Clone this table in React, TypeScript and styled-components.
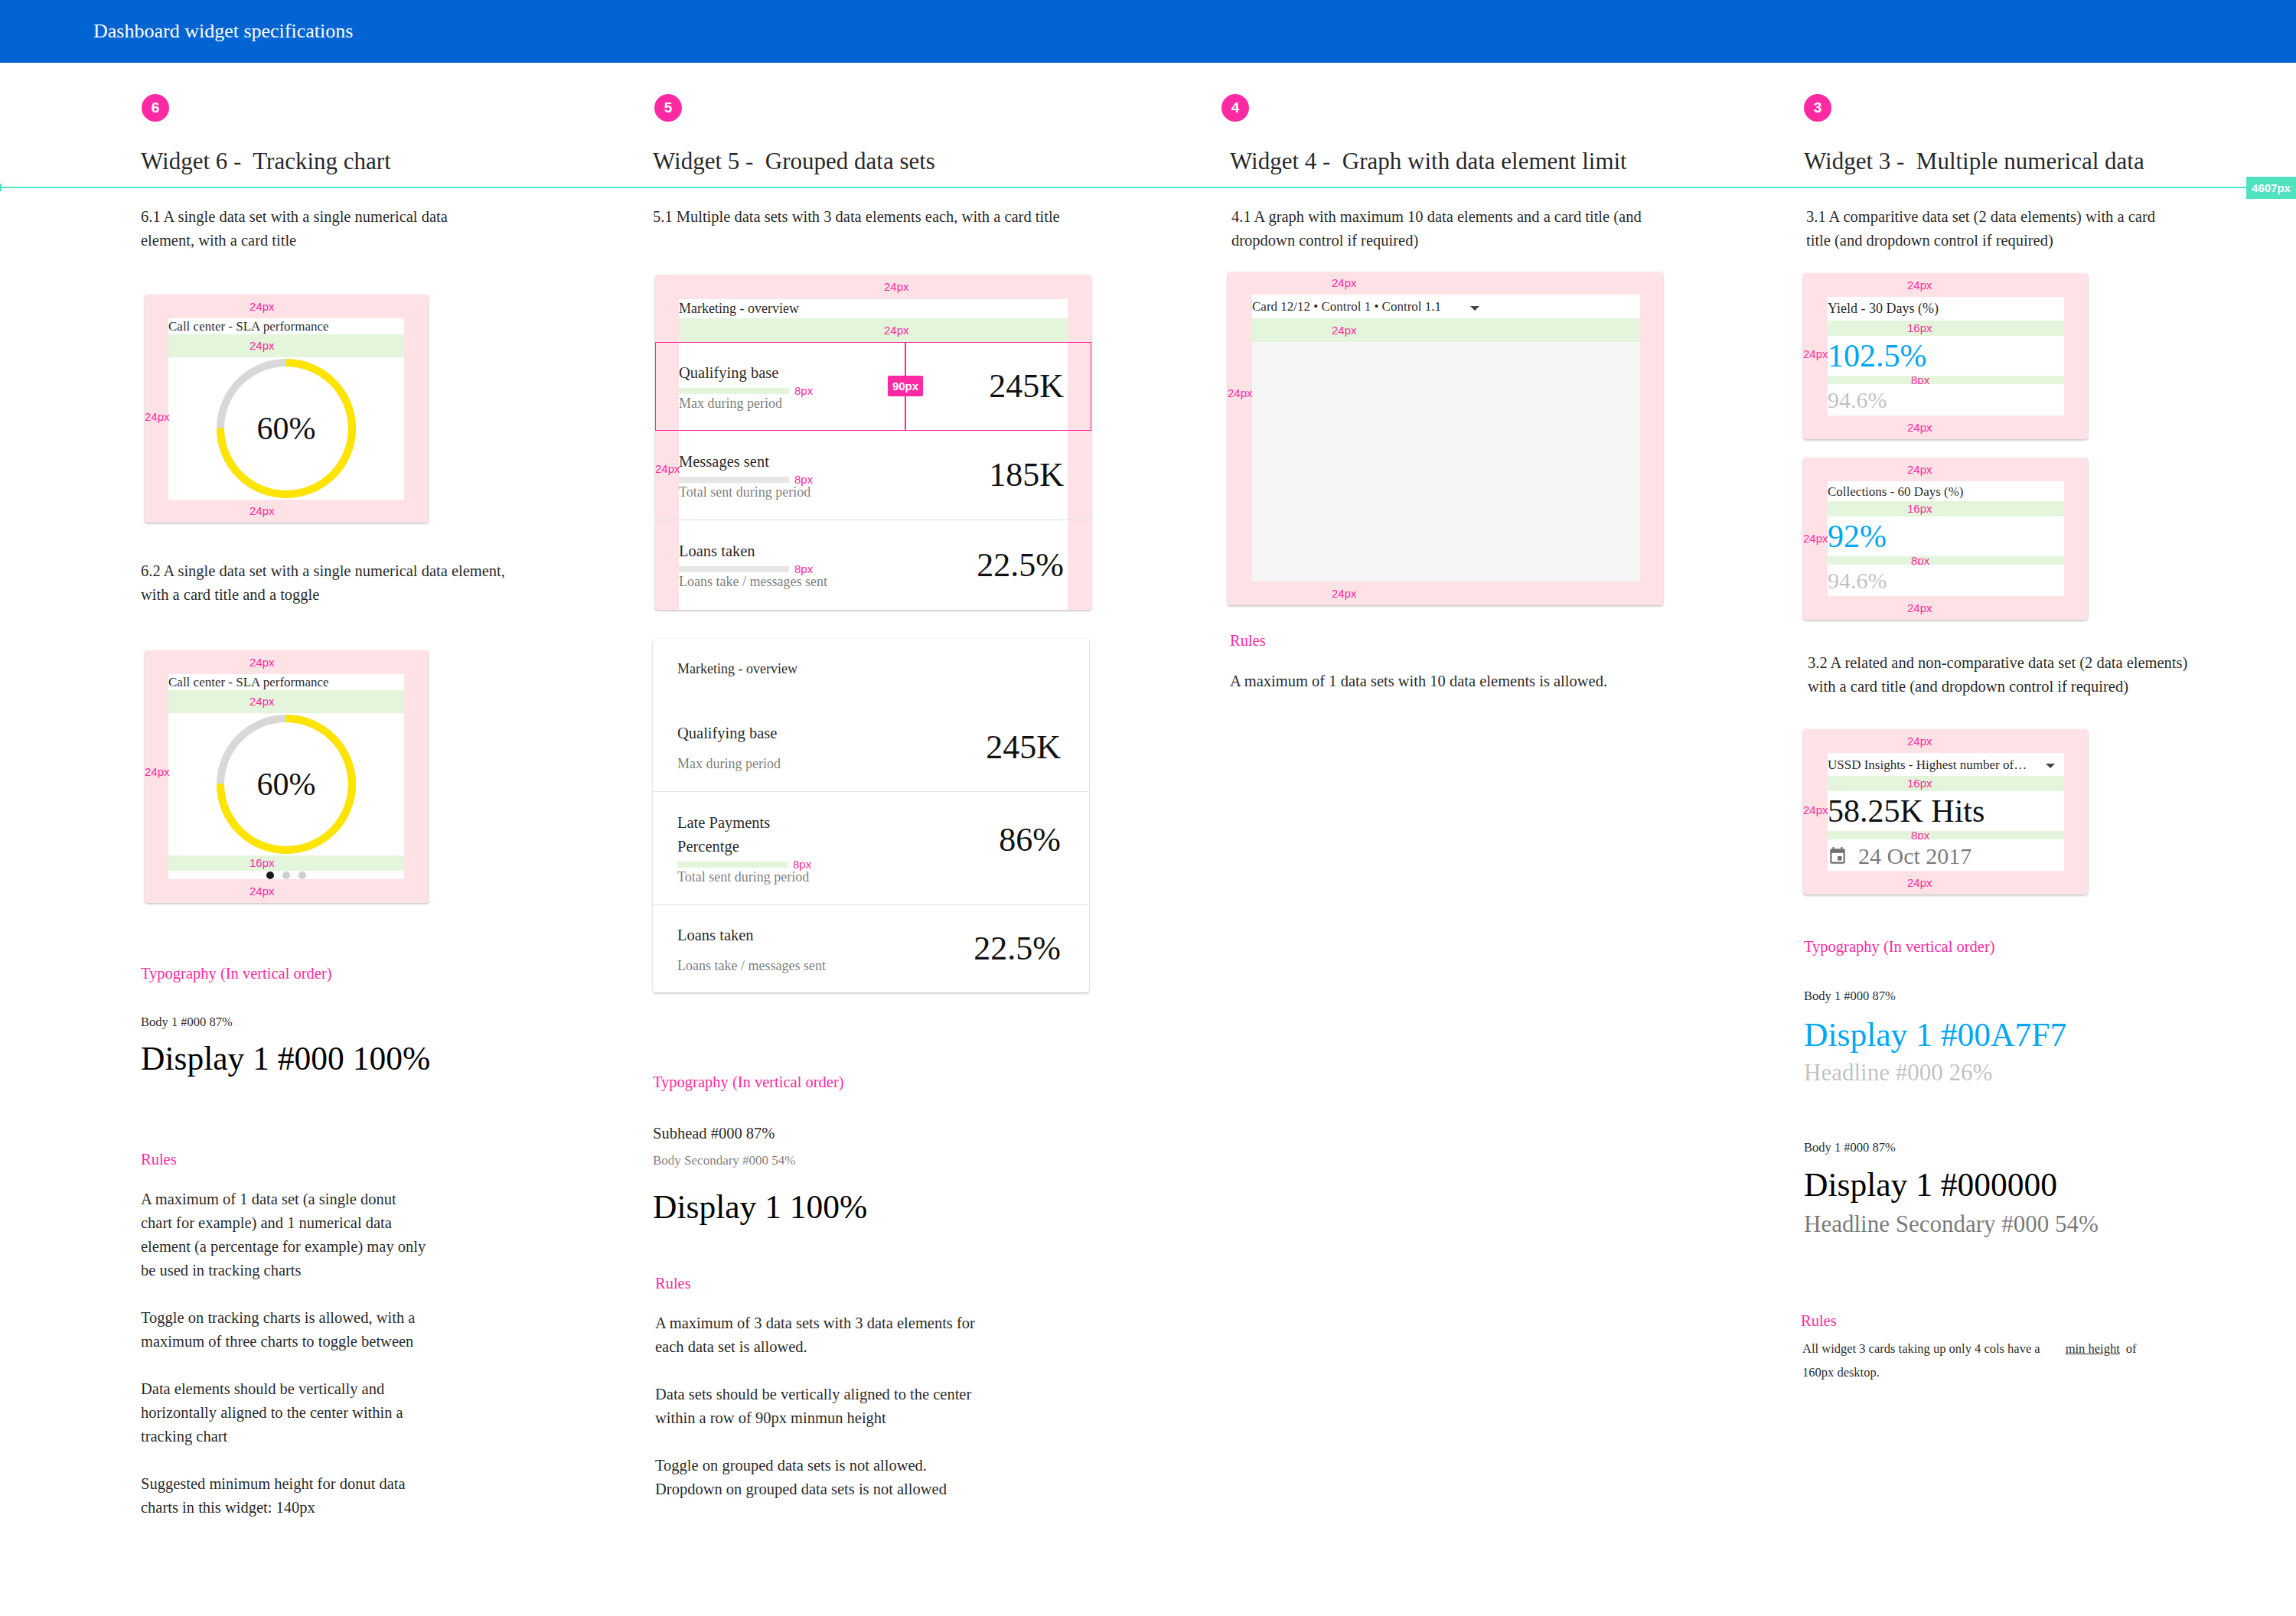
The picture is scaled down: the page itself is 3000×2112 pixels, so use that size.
import styled, { createGlobalStyle } from "styled-components";

const PINK = "#ff2aa3";
const PAD_PINK = "#ffe2e5";
const PAD_GREEN = "#e3f5da";
const TEAL = "#50e3c2";
const INK = "rgba(0, 0, 0, 0.87)";
const INK_SECONDARY = "rgba(0, 0, 0, 0.54)";
const INK_HINT = "rgba(0, 0, 0, 0.26)";
const VALUE_BLUE = "#00a7f7";
const SANS = `"Liberation Sans", Arial, sans-serif`;

const GlobalStyle = createGlobalStyle`
  html, body {
    margin: 0;
    padding: 0;
    background: #fff;
  }
  body {
    width: 3000px;
    min-height: 2112px;
    font-family: "Liberation Serif", "Times New Roman", serif;
    color: ${INK};
  }
`;

const TopBar = styled.header`
  height: 82px;
  display: flex;
  align-items: center;
  padding-left: 122px;
  background: #0263d3;
  color: #fff;
  font-size: 26px;
`;

const ColumnGrid = styled.div`
  display: grid;
  grid-template-columns: 669px 754px 750px 1fr;
  padding-left: 184px;
  align-items: start;
`;

const HeadingGrid = styled(ColumnGrid)`
  padding-top: 41px;
`;

const ContentGrid = styled(ColumnGrid)`
  padding-top: 22px;
  padding-bottom: 80px;
`;

const Heading = styled.div`
  display: flex;
  flex-direction: column;
  align-items: flex-start;
`;

const Badge = styled.div<{ $shift?: number }>`
  width: 36px;
  height: 36px;
  margin-left: ${(p) => p.$shift ?? 0}px;
  border-radius: 50%;
  background: ${PINK};
  color: #fff;
  display: flex;
  align-items: center;
  justify-content: center;
  font: bold 19px ${SANS};
`;

const WidgetTitle = styled.h2`
  margin: 32px 0 0;
  font-size: 31px;
  line-height: 40px;
  font-weight: normal;
  white-space: pre;
`;

const GuideLine = styled.div`
  position: relative;
  width: 2935px;
  height: 2px;
  margin-top: 13px;
  background: ${TEAL};

  &::before {
    content: "";
    position: absolute;
    left: 0;
    top: -4px;
    width: 2px;
    height: 10px;
    background: ${TEAL};
  }
`;

const GuideTag = styled.span`
  position: absolute;
  left: 100%;
  top: -13px;
  width: 65px;
  height: 29px;
  display: flex;
  align-items: center;
  justify-content: center;
  background: ${TEAL};
  color: #fff;
  font: bold 15px ${SANS};
`;

const Column = styled.div`
  display: flex;
  flex-direction: column;
  align-items: flex-start;
`;

const Desc = styled.p<{ $mt?: number; $shift?: number }>`
  margin: ${(p) => p.$mt ?? 0}px 0 0 ${(p) => p.$shift ?? 0}px;
  font-size: 20.5px;
  line-height: 31px;
  white-space: nowrap;
`;

const SectionLabel = styled.div<{ $mt: number; $shift?: number }>`
  margin: ${(p) => p.$mt}px 0 0 ${(p) => p.$shift ?? 0}px;
  color: ${PINK};
  font-size: 20.5px;
  line-height: 31px;
`;

const Body1 = styled.div<{ $mt: number }>`
  margin-top: ${(p) => p.$mt}px;
  font-size: 16.5px;
  line-height: 24px;
`;

const Subhead = styled.div<{ $mt: number }>`
  margin-top: ${(p) => p.$mt}px;
  font-size: 20.5px;
  line-height: 31px;
`;

const BodySecondary = styled.div<{ $mt: number }>`
  margin-top: ${(p) => p.$mt}px;
  font-size: 17px;
  line-height: 24px;
  color: ${INK_SECONDARY};
`;

const Display1 = styled.div<{ $mt: number; $blue?: boolean }>`
  margin-top: ${(p) => p.$mt}px;
  font-size: 43.5px;
  line-height: 50px;
  color: ${(p) => (p.$blue ? VALUE_BLUE : "#000")};
  white-space: nowrap;
`;

const Headline = styled.div<{ $mt: number; $hint?: boolean }>`
  margin-top: ${(p) => p.$mt}px;
  font-size: 31px;
  line-height: 40px;
  color: ${(p) => (p.$hint ? INK_HINT : INK_SECONDARY)};
  white-space: nowrap;
`;

const RuleText = styled.p<{ $mt: number; $small?: boolean; $shift?: number }>`
  margin: ${(p) => p.$mt}px 0 0 ${(p) => p.$shift ?? 0}px;
  font-size: ${(p) => (p.$small ? 16.5 : 20.5)}px;
  line-height: 31px;
  white-space: nowrap;
`;

const Underlined = styled.span`
  margin: 0 8px 0 33px;
  text-decoration: underline;
`;

/* ---------- spec cards ---------- */

const SpecCard = styled.div<{ $w: number; $pad?: string; $mt: number; $shift?: number; $plain?: boolean }>`
  position: relative;
  box-sizing: border-box;
  width: ${(p) => p.$w}px;
  margin: ${(p) => p.$mt}px 0 0 ${(p) => p.$shift ?? 0}px;
  padding: ${(p) => p.$pad ?? "0"};
  display: flex;
  flex-direction: column;
  background: ${(p) => (p.$plain ? "#fff" : PAD_PINK)};
  border-radius: 4px;
  box-shadow: 0 1px 3px rgba(0, 0, 0, 0.2), 0 2px 3px rgba(0, 0, 0, 0.08);
`;

const CardHead = styled.div`
  padding: 0 31px;
`;

const Gap = styled.div<{ $h: number; $green?: boolean; $labelAt: number }>`
  height: ${(p) => p.$h}px;
  display: flex;
  align-items: center;
  padding-left: ${(p) => p.$labelAt}px;
  background: ${(p) => (p.$green ? PAD_GREEN : "transparent")};
  color: ${PINK};
  font: 15px/18px ${SANS};
`;

const Slot = styled.div<{ $h: number; $align?: "start" | "center" | "between"; $chart?: boolean }>`
  height: ${(p) => p.$h}px;
  display: flex;
  align-items: center;
  justify-content: ${(p) =>
    p.$align === "center" ? "center" : p.$align === "between" ? "space-between" : "flex-start"};
  background: ${(p) => (p.$chart ? "#f6f6f6" : "#fff")};
`;

const SideLabel = styled.span<{ $top: number }>`
  position: absolute;
  left: 0;
  top: ${(p) => p.$top}px;
  color: ${PINK};
  font: 15px/18px ${SANS};
`;

const CardTitle = styled.span<{ $size?: number }>`
  font-size: ${(p) => p.$size ?? 17}px;
  line-height: 21px;
  white-space: nowrap;
`;

const Caret = styled.span<{ $gap?: number }>`
  width: 0;
  height: 0;
  margin: 4px 12px 0 ${(p) => p.$gap ?? 0}px;
  border-left: 6px solid transparent;
  border-right: 6px solid transparent;
  border-top: 6px solid #444;
`;

/* donut */

const DonutStack = styled.div`
  display: grid;
  place-items: center;

  & > * {
    grid-area: 1 / 1;
  }
`;

const DonutValue = styled.span`
  font-size: 42px;
  color: #111;
`;

const DotRow = styled.div`
  height: 11px;
  display: flex;
  align-items: center;
  justify-content: center;
  gap: 11px;
  background: #fff;
`;

const Dot = styled.span<{ $active?: boolean }>`
  width: 10px;
  height: 10px;
  border-radius: 50%;
  background: ${(p) => (p.$active ? "#1a1a1a" : "#cfcfcf")};
`;

const RING = 2 * Math.PI * 86;

const Donut = ({ value }: { value: string }) => (
  <DonutStack>
    <svg width="182" height="182" viewBox="0 0 182 182">
      <circle cx="91" cy="91" r="86" fill="none" stroke="#d8d8d8" strokeWidth="10" />
      <circle
        cx="91"
        cy="91"
        r="86"
        fill="none"
        stroke="#ffe400"
        strokeWidth="10"
        strokeDasharray={`${RING * 0.75} ${RING}`}
        transform="rotate(-90 91 91)"
      />
    </svg>
    <DonutValue>{value}</DonutValue>
  </DonutStack>
);

const TrackingCard = ({ mt, toggle }: { mt: number; toggle?: boolean }) => (
  <SpecCard $w={371} $pad="0 32px 0 31px" $mt={mt} $shift={5}>
    <Gap $h={31} $labelAt={106}>24px</Gap>
    <Slot $h={21}>
      <CardTitle>Call center - SLA performance</CardTitle>
    </Slot>
    <Gap $h={30} $green $labelAt={106}>24px</Gap>
    <Slot $h={186} $align="center">
      <Donut value="60%" />
    </Slot>
    {toggle && (
      <>
        <Gap $h={20} $green $labelAt={106}>16px</Gap>
        <DotRow>
          <Dot $active />
          <Dot />
          <Dot />
        </DotRow>
      </>
    )}
    <Gap $h={toggle ? 31 : 30} $labelAt={106}>24px</Gap>
    <SideLabel $top={toggle ? 150 : 151}>24px</SideLabel>
  </SpecCard>
);

/* grouped data rows */

const GroupRow = styled.div<{ $h: number; $inset: number; $divider?: boolean }>`
  position: relative;
  box-sizing: border-box;
  height: ${(p) => p.$h}px;
  padding: 0 ${(p) => p.$inset}px;
  border-top: ${(p) => (p.$divider ? "1px solid #e0e0e0" : "none")};
  display: flex;
`;

const RowBody = styled.div`
  flex: 1;
  display: flex;
  align-items: center;
  justify-content: space-between;
  background: #fff;
`;

const RowText = styled.div`
  display: flex;
  flex-direction: column;
`;

const RowHead = styled.div`
  font-size: 20.5px;
  line-height: 31px;
`;

const BarLine = styled.div`
  height: 8px;
  margin-top: 4px;
  display: flex;
  align-items: center;
`;

const Bar = styled.span<{ $tone: "green" | "grey" | "none" }>`
  width: 144px;
  height: 8px;
  background: ${(p) => (p.$tone === "green" ? PAD_GREEN : p.$tone === "grey" ? "#e8e6e3" : "transparent")};
`;

const BarTag = styled.span`
  margin-left: 7px;
  color: ${PINK};
  font: 15px/8px ${SANS};
`;

const RowSub = styled.div`
  font-size: 18px;
  line-height: 24px;
  color: ${INK_SECONDARY};
  white-space: nowrap;
`;

const RowValue = styled.span<{ $lift?: number }>`
  margin: 0 5px ${(p) => p.$lift ?? 0}px 0;
  font-size: 44px;
  line-height: 50px;
  color: #111;
`;

const RowOutline = styled.div`
  position: absolute;
  inset: 0;
  border: 1.5px solid ${PINK};
  pointer-events: none;
`;

const RowTick = styled.span`
  position: absolute;
  left: 326px;
  top: 0;
  bottom: 0;
  width: 1.5px;
  background: ${PINK};
`;

const RowTag = styled.span`
  position: absolute;
  left: 304px;
  top: 44px;
  width: 46px;
  height: 27px;
  display: flex;
  align-items: center;
  justify-content: center;
  border-radius: 2px;
  background: ${PINK};
  color: #fff;
  font: bold 15px ${SANS};
`;

const PlainHead = styled.div`
  padding: 29px 32px 34px;
  display: flex;
`;

type RowProps = {
  head: React.ReactNode;
  sub: string;
  value: string;
  bar: "green" | "grey" | "none";
  tagged?: boolean;
  lift?: number;
};

const RowContent = ({ head, sub, value, bar, tagged, lift }: RowProps) => (
  <RowBody>
    <RowText>
      <RowHead>{head}</RowHead>
      <BarLine>
        <Bar $tone={bar} />
        {tagged && <BarTag>8px</BarTag>}
      </BarLine>
      <RowSub>{sub}</RowSub>
    </RowText>
    <RowValue $lift={lift}>{value}</RowValue>
  </RowBody>
);

/* numerical data cards */

const BigValue = styled.span<{ $blue?: boolean }>`
  font-size: 42px;
  line-height: 1;
  color: ${(p) => (p.$blue ? VALUE_BLUE : "#111")};
  white-space: nowrap;
`;

const SmallValue = styled.span<{ $hint?: boolean }>`
  font-size: 30px;
  line-height: 1;
  color: ${(p) => (p.$hint ? INK_HINT : INK_SECONDARY)};
  white-space: nowrap;
`;

const DateLine = styled.div`
  display: flex;
  align-items: center;
  gap: 14px;
  margin-top: 2px;
`;

const CalendarIcon = () => (
  <svg width="26" height="26" viewBox="0 0 24 24" fill="#6f6f6f">
    <path d="M17 12h-5v5h5v-5zM16 1v2H8V1H6v2H5c-1.11 0-1.99.9-1.99 2L3 19c0 1.1.89 2 2 2h14c1.1 0 2-.9 2-2V5c0-1.1-.9-2-2-2h-1V1h-2zm3 18H5V8h14v11z" />
  </svg>
);

type NumberCardProps = {
  mt: number;
  titleH: number;
  title: React.ReactNode;
  value: React.ReactNode;
  secondary: React.ReactNode;
};

const NumberCard = ({ mt, titleH, title, value, secondary }: NumberCardProps) => (
  <SpecCard $w={372} $pad="0 31px 0 32px" $mt={mt} $shift={-1}>
    <Gap $h={31} $labelAt={104}>24px</Gap>
    <Slot $h={titleH} $align="between">{title}</Slot>
    <Gap $h={20} $green $labelAt={104}>16px</Gap>
    <Slot $h={52}>{value}</Slot>
    <Gap $h={11} $green $labelAt={109}>8px</Gap>
    <Slot $h={41}>{secondary}</Slot>
    <Gap $h={31} $labelAt={104}>24px</Gap>
    <SideLabel $top={97}>24px</SideLabel>
  </SpecCard>
);

const App = () => {
  return (
    <>
      <GlobalStyle />
      <TopBar>Dashboard widget specifications</TopBar>

      <HeadingGrid>
        <Heading>
          <Badge $shift={1}>6</Badge>
          <WidgetTitle>Widget 6 -  Tracking chart</WidgetTitle>
        </Heading>
        <Heading>
          <Badge $shift={2}>5</Badge>
          <WidgetTitle>Widget 5 -  Grouped data sets</WidgetTitle>
        </Heading>
        <Heading>
          <Badge $shift={-11}>4</Badge>
          <WidgetTitle>Widget 4 -  Graph with data element limit</WidgetTitle>
        </Heading>
        <Heading>
          <Badge>3</Badge>
          <WidgetTitle>Widget 3 -  Multiple numerical data</WidgetTitle>
        </Heading>
      </HeadingGrid>

      <GuideLine>
        <GuideTag>4607px</GuideTag>
      </GuideLine>

      <ContentGrid>
        {/* Widget 6 */}
        <Column>
          <Desc>
            6.1 A single data set with a single numerical data
            <br />
            element, with a card title
          </Desc>
          <TrackingCard mt={55} />
          <Desc $mt={48}>
            6.2 A single data set with a single numerical data element,
            <br />
            with a card title and a toggle
          </Desc>
          <TrackingCard mt={57} toggle />

          <SectionLabel $mt={77}>Typography (In vertical order)</SectionLabel>
          <Body1 $mt={36}>Body 1 #000 87%</Body1>
          <Display1 $mt={10}>Display 1 #000 100%</Display1>

          <SectionLabel $mt={92}>Rules</SectionLabel>
          <RuleText $mt={21}>
            A maximum of 1 data set (a single donut
            <br />
            chart for example) and 1 numerical data
            <br />
            element (a percentage for example) may only
            <br />
            be used in tracking charts
          </RuleText>
          <RuleText $mt={31}>
            Toggle on tracking charts is allowed, with a
            <br />
            maximum of three charts to toggle between
          </RuleText>
          <RuleText $mt={31}>
            Data elements should be vertically and
            <br />
            horizontally aligned to the center within a
            <br />
            tracking chart
          </RuleText>
          <RuleText $mt={31}>
            Suggested minimum height for donut data
            <br />
            charts in this widget: 140px
          </RuleText>
        </Column>

        {/* Widget 5 */}
        <Column>
          <Desc>5.1 Multiple data sets with 3 data elements each, with a card title</Desc>

          <SpecCard $w={570} $mt={60} $shift={3}>
            <CardHead>
              <Gap $h={32} $labelAt={268}>24px</Gap>
              <Slot $h={25}>
                <CardTitle $size={18}>Marketing - overview</CardTitle>
              </Slot>
              <Gap $h={31} $green $labelAt={268}>24px</Gap>
            </CardHead>
            <GroupRow $h={116} $inset={31}>
              <RowContent head="Qualifying base" sub="Max during period" value="245K" bar="green" tagged />
              <RowOutline />
              <RowTick />
              <RowTag>90px</RowTag>
            </GroupRow>
            <GroupRow $h={116} $inset={31}>
              <RowContent head="Messages sent" sub="Total sent during period" value="185K" bar="grey" tagged />
            </GroupRow>
            <GroupRow $h={118} $inset={31} $divider>
              <RowContent head="Loans taken" sub="Loans take / messages sent" value="22.5%" bar="grey" tagged />
            </GroupRow>
            <SideLabel $top={245}>24px</SideLabel>
          </SpecCard>

          <SpecCard $w={570} $mt={38} $plain>
            <PlainHead>
              <CardTitle $size={18}>Marketing - overview</CardTitle>
            </PlainHead>
            <GroupRow $h={115} $inset={32}>
              <RowContent head="Qualifying base" sub="Max during period" value="245K" bar="none" />
            </GroupRow>
            <GroupRow $h={148} $inset={32} $divider>
              <RowContent
                head={
                  <>
                    Late Payments
                    <br />
                    Percentge
                  </>
                }
                sub="Total sent during period"
                value="86%"
                bar="green"
                tagged
                lift={22}
              />
            </GroupRow>
            <GroupRow $h={115} $inset={32} $divider>
              <RowContent head="Loans taken" sub="Loans take / messages sent" value="22.5%" bar="none" />
            </GroupRow>
          </SpecCard>

          <SectionLabel $mt={102}>Typography (In vertical order)</SectionLabel>
          <Subhead $mt={36}>Subhead #000 87%</Subhead>
          <BodySecondary $mt={8}>Body Secondary #000 54%</BodySecondary>
          <Display1 $mt={23}>Display 1 100%</Display1>

          <SectionLabel $mt={60} $shift={3}>Rules</SectionLabel>
          <RuleText $mt={21} $shift={3}>
            A maximum of 3 data sets with 3 data elements for
            <br />
            each data set is allowed.
          </RuleText>
          <RuleText $mt={31} $shift={3}>
            Data sets should be vertically aligned to the center
            <br />
            within a row of 90px minmun height
          </RuleText>
          <RuleText $mt={31} $shift={3}>
            Toggle on grouped data sets is not allowed.
            <br />
            Dropdown on grouped data sets is not allowed
          </RuleText>
        </Column>

        {/* Widget 4 */}
        <Column>
          <Desc $shift={2}>
            4.1 A graph with maximum 10 data elements and a card title (and
            <br />
            dropdown control if required)
          </Desc>
          <SpecCard $w={569} $pad="0 30px 0 32px" $mt={25} $shift={-3}>
            <Gap $h={30} $labelAt={104}>24px</Gap>
            <Slot $h={31}>
              <CardTitle>Card 12/12 • Control 1 • Control 1.1</CardTitle>
              <Caret $gap={38} />
            </Slot>
            <Gap $h={31} $green $labelAt={104}>24px</Gap>
            <Slot $h={313} $chart />
            <Gap $h={31} $labelAt={104}>24px</Gap>
            <SideLabel $top={150}>24px</SideLabel>
          </SpecCard>

          <SectionLabel $mt={31}>Rules</SectionLabel>
          <RuleText $mt={22}>A maximum of 1 data sets with 10 data elements is allowed.</RuleText>
        </Column>

        {/* Widget 3 */}
        <Column>
          <Desc $shift={3}>
            3.1 A comparitive data set (2 data elements) with a card
            <br />
            title (and dropdown control if required)
          </Desc>
          <NumberCard
            mt={27}
            titleH={31}
            title={<CardTitle $size={18}>Yield - 30 Days (%)</CardTitle>}
            value={<BigValue $blue>102.5%</BigValue>}
            secondary={<SmallValue $hint>94.6%</SmallValue>}
          />
          <NumberCard
            mt={24}
            titleH={26}
            title={<CardTitle>Collections - 60 Days (%)</CardTitle>}
            value={<BigValue $blue>92%</BigValue>}
            secondary={<SmallValue $hint>94.6%</SmallValue>}
          />
          <Desc $mt={41} $shift={5}>
            3.2 A related and non-comparative data set (2 data elements)
            <br />
            with a card title (and dropdown control if required)
          </Desc>
          <NumberCard
            mt={40}
            titleH={30}
            title={
              <>
                <CardTitle>USSD Insights - Highest number of…</CardTitle>
                <Caret />
              </>
            }
            value={<BigValue>58.25K Hits</BigValue>}
            secondary={
              <DateLine>
                <CalendarIcon />
                <SmallValue>24 Oct 2017</SmallValue>
              </DateLine>
            }
          />

          <SectionLabel $mt={53}>Typography (In vertical order)</SectionLabel>
          <Body1 $mt={37}>Body 1 #000 87%</Body1>
          <Display1 $mt={13} $blue>Display 1 #00A7F7</Display1>
          <Headline $mt={5} $hint>Headline #000 26%</Headline>
          <Body1 $mt={66}>Body 1 #000 87%</Body1>
          <Display1 $mt={11}>Display 1 #000000</Display1>
          <Headline $mt={7}>Headline Secondary #000 54%</Headline>

          <SectionLabel $mt={91} $shift={-4}>Rules</SectionLabel>
          <RuleText $mt={5} $small $shift={-2}>
            All widget 3 cards taking up only 4 cols have a<Underlined>min height</Underlined>of
            <br />
            160px desktop.
          </RuleText>
        </Column>
      </ContentGrid>
    </>
  );
};

export default App;
